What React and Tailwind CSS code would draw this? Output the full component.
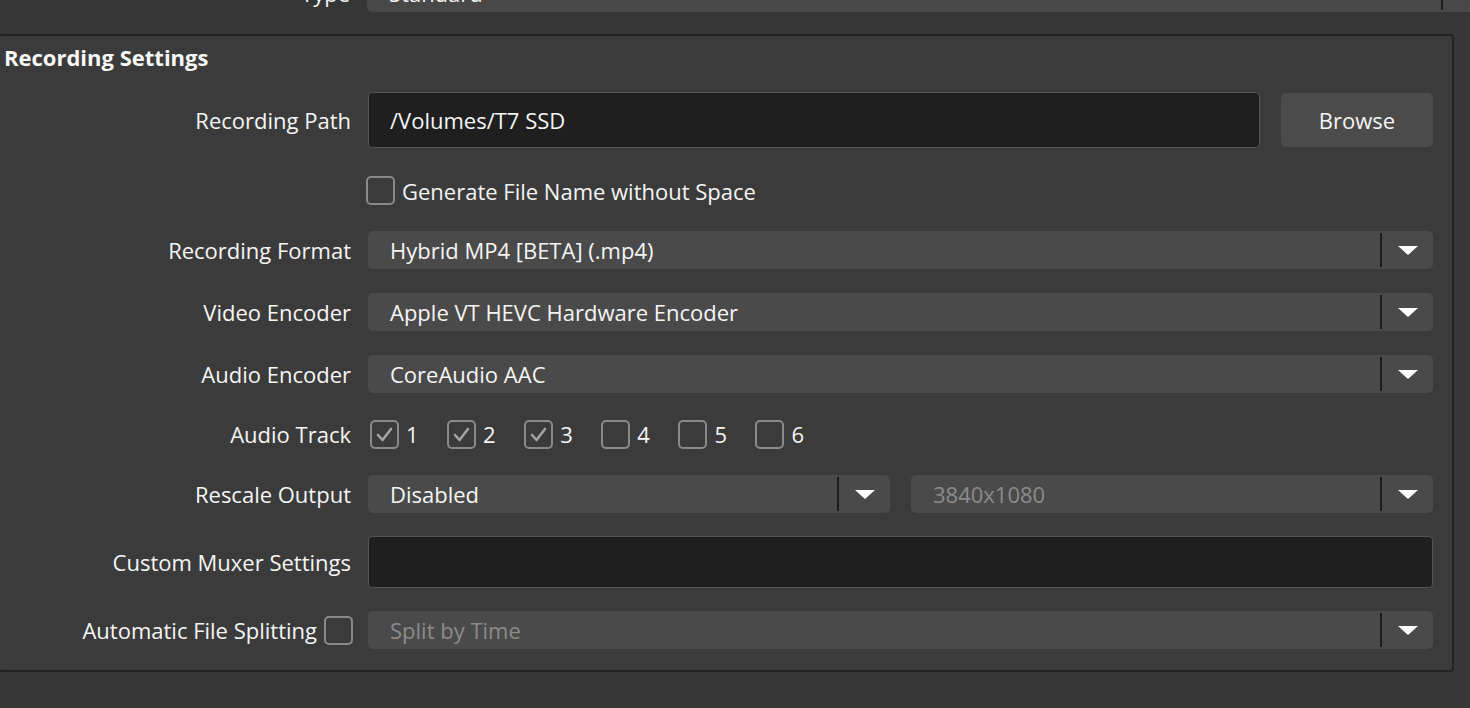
import React from "react";

const Arrow = () => (
  <svg width="20" height="9" viewBox="0 0 20 9">
    <polygon points="0,0 20,0 10,9" fill="#ffffff" />
  </svg>
);

function Select({ text, disabled }) {
  return (
    <div className="flex h-[38px] flex-1 items-center rounded-[5px] bg-[#4a4a4a]">
      <span className={disabled ? "flex-1 pl-[22px] text-[#8b8b8b]" : "flex-1 pl-[22px] text-[#f5f5f5]"}>{text}</span>
      <div className="h-[34px] w-[2px] bg-[#1c1c1c]" />
      <div className="flex w-[51px] items-center justify-center">
        <Arrow />
      </div>
    </div>
  );
}

function Check({ checked }) {
  return (
    <div className="flex h-[29px] w-[29px] shrink-0 items-center justify-center rounded-[5px] border-2 border-[#8a8a8a]">
      {checked ? (
        <svg width="25" height="25" viewBox="0 0 25 25">
          <polyline points="6,13 10.5,18 19,7" fill="none" stroke="#a3a3a3" strokeWidth="2.6" strokeLinecap="round" strokeLinejoin="round" />
        </svg>
      ) : null}
    </div>
  );
}

function Label({ children }) {
  return <div className="w-[351px] shrink-0 text-right text-[#f5f5f5]">{children}</div>;
}

export default function App() {
  return (
    <div
      className="h-[708px] w-[1470px] overflow-hidden bg-[#363636] text-[22px] leading-[30px] text-[#f5f5f5]"
      style={{ fontFamily: '"Open Sans", "Noto Sans", sans-serif' }}
    >
      {/* Type row (cut off at top) */}
      <div className="-mt-[26px] flex h-[38px] items-center">
        <div className="w-[350px] shrink-0 text-right">Type</div>
        <div className="ml-[17px] flex h-[38px] w-[1140px] shrink-0 items-center rounded-[5px] bg-[#484848]">
          <span className="w-[1074px] pl-[22px]">Standard</span>
          <div className="h-[34px] w-[2px] bg-[#1c1c1c]" />
        </div>
      </div>

      {/* Panel */}
      <div className="-ml-[2px] mt-[22px] w-[1456px] rounded-[4px] border-2 border-[#222222] bg-[#3b3b3b] pb-[21px] pr-[19px] pt-[6px]">
        <div className="pl-[4px] font-bold text-[#f8f8f8]">Recording Settings</div>

        <div className="mt-[20px] flex h-[56px] items-center">
          <Label>Recording Path</Label>
          <div className="ml-[17px] flex h-[56px] flex-1 items-center rounded-[4px] border-[1.5px] border-[#555555] bg-[#1f1f1f] pl-[21px]">
            /Volumes/T7 SSD
          </div>
          <div className="ml-[21px] flex h-[54px] w-[152px] items-center justify-center rounded-[5px] bg-[#4b4b4b]">
            Browse
          </div>
        </div>

        <div className="mt-[28px] flex h-[29px] items-center pl-[366px]">
          <Check />
          <span className="ml-[7px]">Generate File Name without Space</span>
        </div>

        <div className="mt-[26px] flex items-center">
          <Label>Recording Format</Label>
          <div className="ml-[17px] flex flex-1">
            <Select text="Hybrid MP4 [BETA] (.mp4)" />
          </div>
        </div>

        <div className="mt-[24px] flex items-center">
          <Label>Video Encoder</Label>
          <div className="ml-[17px] flex flex-1">
            <Select text="Apple VT HEVC Hardware Encoder" />
          </div>
        </div>

        <div className="mt-[24px] flex items-center">
          <Label>Audio Encoder</Label>
          <div className="ml-[17px] flex flex-1">
            <Select text="CoreAudio AAC" />
          </div>
        </div>

        <div className="mt-[26px] flex h-[30px] items-center">
          <Label>Audio Track</Label>
          <div className="ml-[19px] flex items-center gap-[28.5px]">
            {[1, 2, 3, 4, 5, 6].map((n) => (
              <div key={n} className="flex items-center">
                <Check checked={n <= 3} />
                <span className="ml-[7px]">{n}</span>
              </div>
            ))}
          </div>
        </div>

        <div className="mt-[26px] flex items-center">
          <Label>Rescale Output</Label>
          <div className="ml-[17px] flex flex-1 gap-[21px]">
            <Select text="Disabled" />
            <Select text="3840x1080" disabled />
          </div>
        </div>

        <div className="mt-[23px] flex items-center">
          <Label>Custom Muxer Settings</Label>
          <div className="ml-[17px] h-[52px] flex-1 rounded-[4px] border-[1.5px] border-[#555555] bg-[#1f1f1f]" />
        </div>

        <div className="mt-[23px] flex items-center">
          <div className="flex w-[353px] shrink-0 items-center justify-end">
            <span>Automatic File Splitting</span>
            <div className="ml-[7px]">
              <Check />
            </div>
          </div>
          <div className="ml-[15px] flex flex-1">
            <Select text="Split by Time" disabled />
          </div>
        </div>
      </div>
    </div>
  );
}
